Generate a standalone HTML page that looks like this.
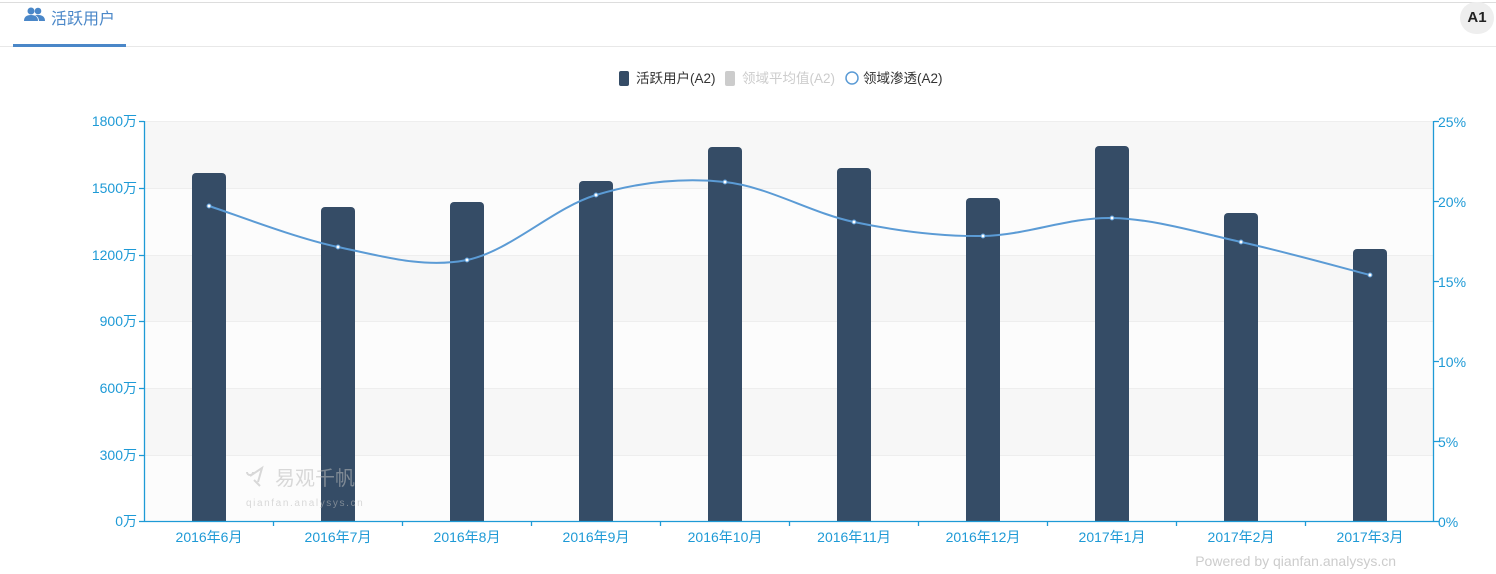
<!DOCTYPE html><html><head><meta charset="utf-8"><style>
body{margin:0;width:1496px;height:574px;background:#fff;font-family:"Liberation Sans","Noto Sans CJK SC",sans-serif;overflow:hidden;position:relative}
</style></head><body>
<div style="position:absolute;left:0;top:2px;width:1496px;height:1px;background:#ddd"></div>
<div style="position:absolute;left:0;top:46px;width:1496px;height:1px;background:#e8e8e8"></div>
<div style="position:absolute;left:13px;top:44px;width:113px;height:3px;background:#4a87c8"></div>
<svg style="position:absolute;left:24px;top:6px" width="22" height="18" viewBox="0 0 22 18"><circle cx="7" cy="5" r="3.5" fill="#4a87c8"/><path d="M0 15 Q0 9 7 9 Q14 9 14 15Z" fill="#4a87c8"/><circle cx="14" cy="5" r="3.3" fill="#4a87c8"/><path d="M11 9 Q21 8 21 15 L15 15 Q15 11 11 9Z" fill="#4a87c8"/></svg>
<div style="position:absolute;left:51px;top:5px;font-size:16px;color:#4a87c8">活跃用户</div>
<div style="position:absolute;left:1460px;top:2px;width:34px;height:32px;border-radius:17px;background:#eee;font-weight:bold;font-size:15px;line-height:32px;text-align:center;color:#222">A1</div>
<svg style="position:absolute;left:0;top:0" width="1496" height="574" font-family="Liberation Sans, Noto Sans CJK SC, sans-serif">
<g font-size="13.5">
<rect x="619" y="71" width="10" height="15" rx="2" fill="#354c66"/><text x="636" y="83" fill="#333">活跃用户(A2)</text>
<rect x="725" y="71" width="10" height="15" rx="2" fill="#ccc"/><text x="742" y="83" fill="#ccc">领域平均值(A2)</text>
<circle cx="852" cy="78" r="6" fill="none" stroke="#5b9bd5" stroke-width="1.5"/><text x="863" y="83" fill="#333">领域渗透(A2)</text>
</g>
<rect x="144" y="121" width="1290" height="67" fill="#f7f7f7"/>
<rect x="144" y="188" width="1290" height="67" fill="#fcfcfc"/>
<rect x="144" y="255" width="1290" height="66" fill="#f7f7f7"/>
<rect x="144" y="321" width="1290" height="67" fill="#fcfcfc"/>
<rect x="144" y="388" width="1290" height="67" fill="#f7f7f7"/>
<rect x="144" y="455" width="1290" height="66" fill="#fcfcfc"/>
<g stroke="#eee"><line x1="144" x2="1434" y1="121.5" y2="121.5"/><line x1="144" x2="1434" y1="188.5" y2="188.5"/><line x1="144" x2="1434" y1="255.5" y2="255.5"/><line x1="144" x2="1434" y1="321.5" y2="321.5"/><line x1="144" x2="1434" y1="388.5" y2="388.5"/><line x1="144" x2="1434" y1="455.5" y2="455.5"/></g>
<g fill="#354c66">
<rect x="192" y="173" width="34" height="352" rx="4"/><rect x="321" y="207" width="34" height="318" rx="4"/><rect x="450" y="202" width="34" height="323" rx="4"/><rect x="579" y="181" width="34" height="344" rx="4"/><rect x="708" y="147" width="34" height="378" rx="4"/><rect x="837" y="168" width="34" height="357" rx="4"/><rect x="966" y="198" width="34" height="327" rx="4"/><rect x="1095" y="146" width="34" height="379" rx="4"/><rect x="1224" y="213" width="34" height="312" rx="4"/><rect x="1353" y="249" width="34" height="276" rx="4"/>
</g>
<g opacity="0.55">
<path d="M250 476 L262 468 L258 482 M247 472 A3 3 0 1 0 253 472 M254 480 L260 486" stroke="#bbb" stroke-width="2" fill="none"/>
<text x="275" y="485" font-size="20" fill="#bbb">易观千帆</text>
<text x="246" y="506" font-size="10" fill="#bbb" letter-spacing="1.6">qianfan.analysys.cn</text>
</g>
<rect x="140" y="522" width="1300" height="10" fill="#fff"/>
<path d="M209 206 C230.5 212.8 295 238 338 247 C381 256 424 268.7 467 260 C510 251.3 553 208 596 195 C639 182 682 177.5 725 182 C768 186.5 811 213 854 222 C897 231 940 236.7 983 236 C1026 235.3 1069 217 1112 218 C1155 219 1198 232.5 1241 242 C1284 251.5 1348.5 269.5 1370 275" fill="none" stroke="#5b9bd5" stroke-width="2"/>
<g fill="#fff" stroke="#5b9bd5" stroke-width="1"><circle cx="209" cy="206" r="2"/><circle cx="338" cy="247" r="2"/><circle cx="467" cy="260" r="2"/><circle cx="596" cy="195" r="2"/><circle cx="725" cy="182" r="2"/><circle cx="854" cy="222" r="2"/><circle cx="983" cy="236" r="2"/><circle cx="1112" cy="218" r="2"/><circle cx="1241" cy="242" r="2"/><circle cx="1370" cy="275" r="2"/></g>
<g stroke="#1e9ad6" stroke-width="1.3" fill="none">
<line x1="144.5" y1="121" x2="144.5" y2="521"/><line x1="1433.5" y1="121" x2="1433.5" y2="521"/><line x1="144" y1="521.5" x2="1434" y2="521.5"/>
<path d="M139 121.5H144M139 188.5H144M139 255.5H144M139 321.5H144M139 388.5H144M139 455.5H144M139 521.5H144"/>
<path d="M1434 121.5H1439M1434 201.5H1439M1434 281.5H1439M1434 361.5H1439M1434 441.5H1439M1434 521.5H1439"/>
<path d="M273.5 521V526M402.5 521V526M531.5 521V526M660.5 521V526M789.5 521V526M918.5 521V526M1047.5 521V526M1176.5 521V526M1305.5 521V526"/>
</g>
<g font-size="14" fill="#1e9ad6" text-anchor="end">
<text x="137" y="126">1800万</text><text x="137" y="193">1500万</text><text x="137" y="260">1200万</text><text x="137" y="326">900万</text><text x="137" y="393">600万</text><text x="137" y="460">300万</text><text x="137" y="526">0万</text>
</g>
<g font-size="14" fill="#1e9ad6">
<text x="1438" y="127">25%</text><text x="1438" y="207">20%</text><text x="1438" y="287">15%</text><text x="1438" y="367">10%</text><text x="1438" y="447">5%</text><text x="1438" y="527">0%</text>
</g>
<g font-size="14" fill="#1e9ad6" text-anchor="middle">
<text x="209" y="542">2016年6月</text><text x="338" y="542">2016年7月</text><text x="467" y="542">2016年8月</text><text x="596" y="542">2016年9月</text><text x="725" y="542">2016年10月</text><text x="854" y="542">2016年11月</text><text x="983" y="542">2016年12月</text><text x="1112" y="542">2017年1月</text><text x="1241" y="542">2017年2月</text><text x="1370" y="542">2017年3月</text>
</g>
<text x="1396" y="566" font-size="14" fill="#ccc" text-anchor="end">Powered by qianfan.analysys.cn</text>
</svg>
</body></html>
